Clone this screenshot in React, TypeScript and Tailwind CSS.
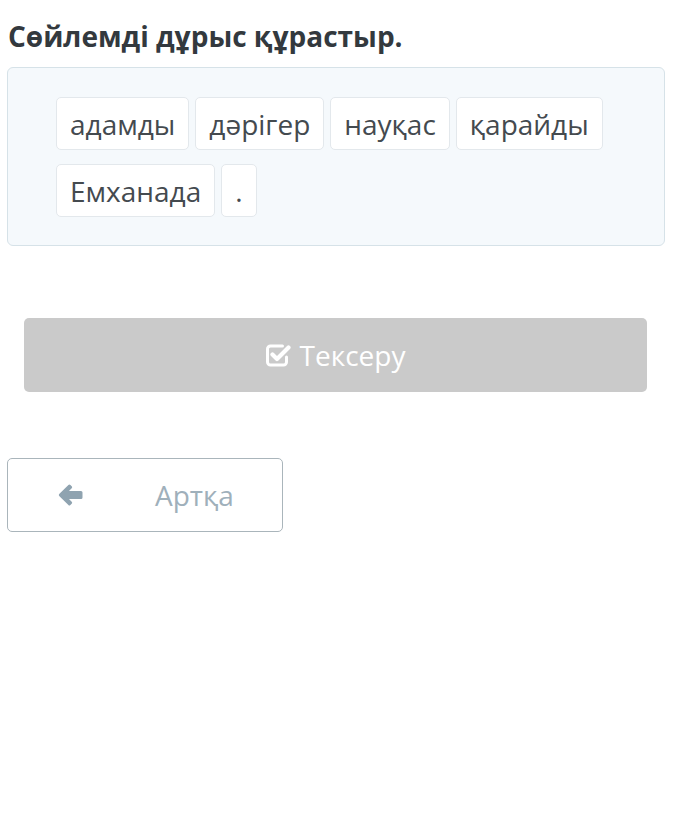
import React from "react";

const words1 = ["адамды", "дәрігер", "науқас", "қарайды"];
const words2 = ["Емханада", "."];

function Chip({ w }: { w: string }) {
  return (
    <div className="h-[53px] px-[13px] flex items-center bg-white border border-[#e3e8ec] rounded-[5px] text-[28px] text-[#444a4f]">
      {w}
    </div>
  );
}

function CheckSquare() {
  return (
    <svg width="25" height="23" viewBox="0 0 25 23">
      <path
        d="M20.5 13v5a3 3 0 0 1-3 3H4.5a3 3 0 0 1-3-3V5a3 3 0 0 1 3-3h12"
        fill="none"
        stroke="white"
        strokeWidth="3"
        strokeLinecap="round"
      />
      <path d="M6.5 10.5l4.5 4.5L22.5 3.5" fill="none" stroke="white" strokeWidth="4.2" strokeLinecap="round" strokeLinejoin="round" />
    </svg>
  );
}

function ArrowLeft() {
  return (
    <svg width="25" height="24" viewBox="0 0 25 24">
      <path
        d="M1.2 12.9a1.3 1.3 0 0 1 0-1.8L10.4 1.9a1.4 1.4 0 0 1 2 0l1.3 1.3a1.4 1.4 0 0 1 0 2L11 8H23a1.5 1.5 0 0 1 1.5 1.5v5A1.5 1.5 0 0 1 23 16H11l2.7 2.8a1.4 1.4 0 0 1 0 2l-1.3 1.3a1.4 1.4 0 0 1-2 0z"
        fill="#8fa3b0"
      />
    </svg>
  );
}

export default function App() {
  return (
    <div className="w-[695px] h-[827px] bg-white" style={{ fontFamily: '"Open Sans", sans-serif' }}>
      <div className="pl-[8px] pt-[14px]">
        <h1 className="text-[28px] font-bold text-[#33393e] leading-[44px]">Сөйлемді дұрыс құрастыр.</h1>
      </div>
      <div className="ml-[7px] mt-[9px] w-[658px] h-[179px] bg-[#f5f9fc] border border-[#d6e2e8] rounded-[6px] pl-[48px] pt-[29px] flex flex-col gap-[14px]">
        <div className="flex gap-[6px]">
          {words1.map((w) => (
            <Chip key={w} w={w} />
          ))}
        </div>
        <div className="flex gap-[6px]">
          {words2.map((w) => (
            <Chip key={w} w={w} />
          ))}
        </div>
      </div>
      <div className="ml-[24px] mt-[72px] w-[623px] h-[74px] bg-[#cacaca] rounded-[5px] flex items-center justify-center gap-[9px] text-white text-[28px]">
        <CheckSquare />
        <span>Тексеру</span>
      </div>
      <div className="ml-[7px] mt-[66px] w-[276px] h-[74px] border border-[#aab5bb] rounded-[5px] flex items-center text-[28px] text-[#9fb0bb]">
        <div className="ml-[50px]">
          <ArrowLeft />
        </div>
        <span className="ml-[72px]">Артқа</span>
      </div>
    </div>
  );
}
